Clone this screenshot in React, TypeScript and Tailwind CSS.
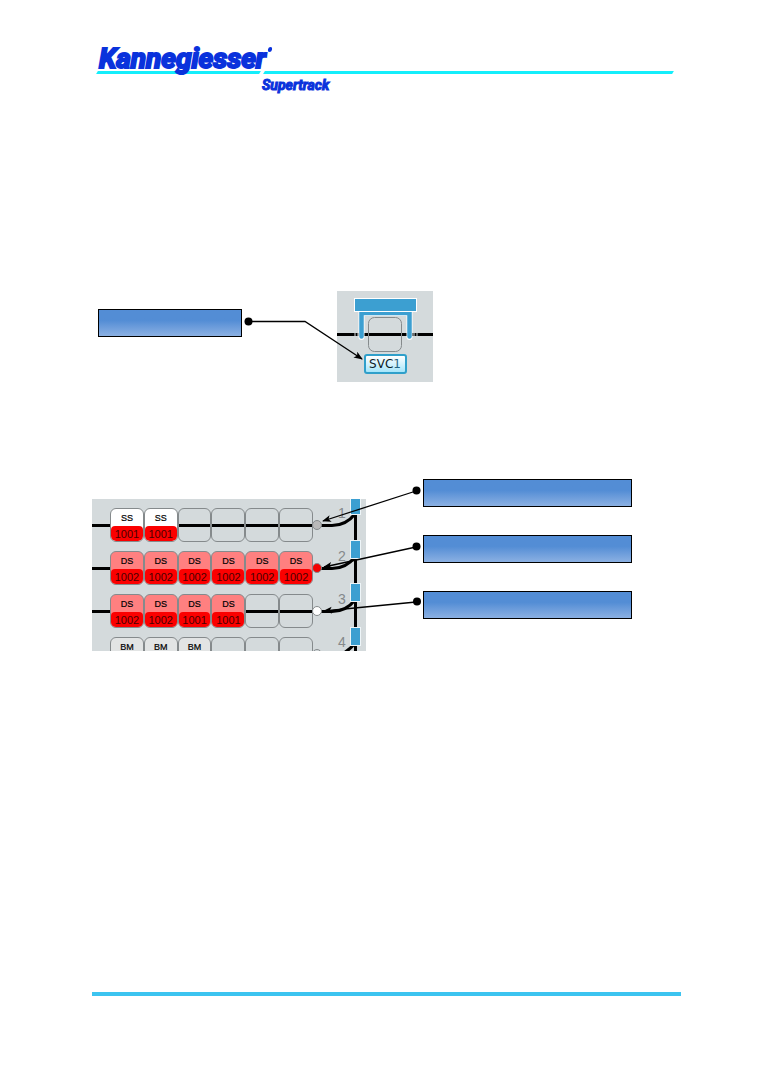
import React from "react";

type Tone = "white" | "red" | "grey";
type Slot = { code: string; batch?: string; tone: Tone } | null;
type Line = { id: number; lamp: string; slots: Slot[] };

const full = (code: string, batch: string): Slot => ({ code, batch, tone: "red" });

const lines: Line[] = [
  {
    id: 1,
    lamp: "bg-[#b9b9b9]",
    slots: [
      { code: "SS", batch: "1001", tone: "white" },
      { code: "SS", batch: "1001", tone: "white" },
      null, null, null, null,
    ],
  },
  {
    id: 2,
    lamp: "bg-[#f40000]",
    slots: [
      full("DS", "1002"), full("DS", "1002"), full("DS", "1002"),
      full("DS", "1002"), full("DS", "1002"), full("DS", "1002"),
    ],
  },
  {
    id: 3,
    lamp: "bg-white",
    slots: [
      full("DS", "1002"), full("DS", "1002"), full("DS", "1001"), full("DS", "1001"),
      null, null,
    ],
  },
  {
    id: 4,
    lamp: "bg-[#d4dadc]",
    slots: [
      { code: "BM", tone: "grey" },
      { code: "BM", tone: "grey" },
      { code: "BM", tone: "grey" },
      null, null, null,
    ],
  },
];

const tones: Record<Tone, string> = {
  white: "bg-white",
  red: "bg-[#ff8080]",
  grey: "bg-[#e2e4e4]",
};

function Cell({ slot }: { slot: Slot }) {
  return (
    <div
      className={`flex h-[34px] flex-col items-center justify-between overflow-hidden rounded-[6px] border border-[#858a8c] ${
        slot ? tones[slot.tone] : ""
      }`}
    >
      {slot && (
        <>
          <span className="pt-[3px] text-[9px] leading-[12px] text-black [-webkit-text-stroke:0.2px_black]">{slot.code}</span>
          {slot.batch && (
            <span className="h-[15px] w-full rounded-[4px] bg-[#fb0000] text-center text-[11px] leading-[17px] text-[#4a0000]">
              {slot.batch}
            </span>
          )}
        </>
      )}
    </div>
  );
}

function Callout({ className }: { className: string }) {
  return (
    <div
      className={`h-7 border border-black bg-linear-to-b from-[#538dd5] from-40% to-[#8bb0e2] ${className}`}
    />
  );
}

function ArrowHead({ id }: { id: string }) {
  return (
    <marker id={id} markerUnits="userSpaceOnUse" markerWidth="10" markerHeight="8" refX="8" refY="3.5" orient="auto">
      <path d="M0 0 L9 3.5 L0 7 L2.2 3.5 Z" fill="#000" />
    </marker>
  );
}

function Header() {
  return (
    <header className="ml-[97px] mr-[88px] pt-[42px] text-[#0a32dc]">
      <div className="relative z-10 h-[29px] pl-[2px] font-['Roboto','Liberation_Sans',sans-serif] text-[28px] font-bold italic leading-[34px] [-webkit-text-stroke:2px_#0a32dc]">
        Kannegiesser
        <span className="absolute top-[5px] ml-[2px] h-[5px] w-1 -skew-x-12 rounded-full bg-[#0a32dc]" />
      </div>
      <div className="flex h-[3px] gap-1">
        <div className="w-[163px] -skew-x-[30deg] bg-[#14eefb]" />
        <div className="flex-1 -skew-x-[30deg] bg-[#14eefb]" />
      </div>
      <div className="pl-[165px] pt-[1px] font-['Roboto','Liberation_Sans',sans-serif] text-[14px] font-bold italic leading-[20px] [-webkit-text-stroke:1px_#0a32dc]">
        Supertrack
      </div>
    </header>
  );
}

function StationFigure() {
  return (
    <section className="relative ml-[92px] mt-[196px] flex items-start">
      <Callout className="ml-[6px] mt-[18px] w-36" />
      <div className="ml-[95px] flex h-[91px] w-24 flex-col items-center bg-[#d4dadc]">
        <svg width="96" height="63" viewBox="0 0 96 63" aria-hidden="true">
          <path d="M0 43.5H96" stroke="#000" strokeWidth="3" />
          <path d="M18 42v3M21 42v3M77 42v3M80 42v3" stroke="#d4dadc" strokeWidth="1" />
          <rect x="31.5" y="26.5" width="33" height="34" rx="6" fill="none" stroke="#858a8c" />
          <path d="M24.500 46V22H72.500V46" fill="none" stroke="#fff" strokeWidth="6" strokeLinecap="round" />
          <path d="M24.500 45.500V22H72.500V45.500" fill="none" stroke="#3c9fd1" strokeWidth="4.500" strokeLinecap="round" />
          <rect x="17.500" y="7.500" width="62" height="13" fill="#3c9fd1" stroke="#fff" />
        </svg>
        <button className="h-5 w-[43px] rounded-[3px] border-2 border-[#2f9fca] bg-linear-to-b from-white to-[#a5e5fa] font-['DejaVu_Sans',sans-serif] text-[12px] leading-[16px] text-[#0c1c28]">
          SVC<span className="text-[#236482]">1</span>
        </button>
      </div>
      <svg className="absolute left-0 top-0" width="341" height="91" viewBox="0 0 341 91" aria-hidden="true">
        <defs><ArrowHead id="head-station" /></defs>
        <circle cx="156.500" cy="30.500" r="4" />
        <path d="M157 30.500H213L270 68" fill="none" stroke="#000" strokeWidth="1.300" markerEnd="url(#head-station)" />
      </svg>
    </section>
  );
}

function LinesFigure() {
  return (
    <section className="relative ml-[92px] mt-[97px] flex items-start">
      <div className="relative mt-5 h-[152px] w-[274px] overflow-hidden bg-[#d4dadc]">
        <svg className="absolute left-0 top-0" width="274" height="152" viewBox="0 0 274 152" aria-hidden="true">
          <g fill="none" stroke="#000" strokeWidth="3">
            <path d="M0 26.500H240Q254 26.500 263 15" />
            <path d="M0 69.500H240Q254 69.500 263 58" />
            <path d="M0 112.500H240Q254 112.500 263 101" />
            <path d="M248 155.500Q256 153 263 144" />
            <path d="M263.500 14V152" />
          </g>
          <g fill="#3c9fd1" stroke="#eef5f8" strokeWidth="1">
            <rect x="258.500" y="-2.500" width="10" height="18" />
            <rect x="258.500" y="41.500" width="10" height="18" />
            <rect x="258.500" y="84.500" width="10" height="18" />
            <rect x="258.500" y="128.500" width="10" height="18" />
          </g>
        </svg>
        <div className="relative flex flex-col gap-[9px] pl-[18px] pt-[9px]">
          {lines.map((line) => (
            <div key={line.id} className="flex h-[34px] items-center">
              <div className="grid w-[203px] grid-cols-6">
                {line.slots.map((slot, i) => (
                  <Cell key={i} slot={slot} />
                ))}
              </div>
              <span className={`-ml-px size-[10px] rounded-full border border-[#858a8c] ${line.lamp}`} />
              <span className="ml-4 self-start text-[14px] leading-[11px] text-[#85898b]">{line.id}</span>
            </div>
          ))}
        </div>
      </div>
      <div className="ml-[57px] flex flex-col gap-7">
        <Callout className="w-[209px]" />
        <Callout className="w-[209px]" />
        <Callout className="w-[209px]" />
      </div>
      <svg className="absolute left-0 top-0" width="335" height="172" viewBox="0 0 335 172" aria-hidden="true">
        <defs><ArrowHead id="head-lines" /></defs>
        <g stroke="#000" strokeWidth="1.300">
          <path d="M324 12L231 42" markerEnd="url(#head-lines)" />
          <path d="M324 68L232 88" markerEnd="url(#head-lines)" />
          <path d="M324 123L232 132" markerEnd="url(#head-lines)" />
        </g>
        <circle cx="324.500" cy="11.500" r="4" />
        <circle cx="324.500" cy="67.500" r="4" />
        <circle cx="325" cy="122.500" r="4" />
      </svg>
    </section>
  );
}

export default function App() {
  return (
    <div className="flex min-h-screen flex-col bg-white font-['Liberation_Sans',sans-serif]">
      <Header />
      <main className="flex-1">
        <StationFigure />
        <LinesFigure />
      </main>
      <footer className="mb-[79px] ml-[92px] mr-20 h-1 bg-[#3cc4f0]" />
    </div>
  );
}
